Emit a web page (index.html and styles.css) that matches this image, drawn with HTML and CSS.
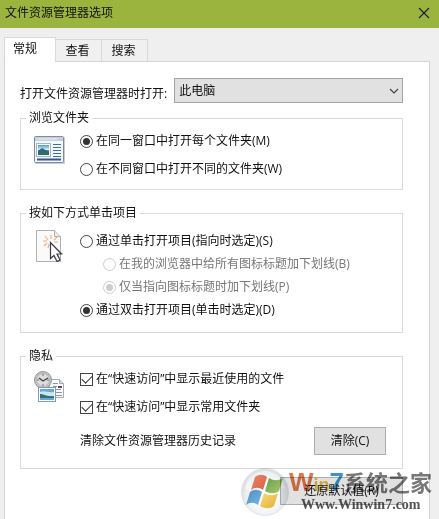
FILE: index.html
```html
<!DOCTYPE html>
<html lang="zh-CN">
<head>
    <meta charset="utf-8" />
    <title>文件资源管理器选项</title>
    <link rel="stylesheet" href="styles.css">
</head>
<body>
    <header class="titlebar">
        <span class="title">文件资源管理器选项</span>
        <button type="button" class="close" aria-label="关闭">
            <svg width="12" height="12" viewBox="0 0 12 12"><path d="M1 1L11 11M11 1L1 11" stroke="#222" stroke-width="1.2" fill="none"/></svg>
        </button>
    </header>
    <div class="tabs">
        <button type="button" class="tab active">常规</button>
        <button type="button" class="tab">查看</button>
        <button type="button" class="tab">搜索</button>
    </div>
    <main class="panel">
        <div class="open-row">
            <label for="open-to">打开文件资源管理器时打开:</label>
            <div class="select-wrap">
                <select id="open-to">
                    <option>此电脑</option>
                    <option>快速访问</option>
                </select>
                <svg class="arrow" width="10" height="6" viewBox="0 0 10 6"><path d="M1 1L5 5L9 1" stroke="#444" stroke-width="1.2" fill="none"/></svg>
            </div>
        </div>

        <fieldset class="group browse">
            <legend>浏览文件夹</legend>
            <svg class="icon" width="32" height="32" viewBox="0 0 32 32">
                <defs>
                    <linearGradient id="photo" x1="0" y1="0" x2="0" y2="1">
                        <stop offset="0" stop-color="#4f9ccc"/>
                        <stop offset=".45" stop-color="#d5edf3"/>
                        <stop offset=".6" stop-color="#2c6a74"/>
                        <stop offset="1" stop-color="#5ba4a5"/>
                    </linearGradient>
                </defs>
                <rect x="1" y="3" width="30" height="27" rx="1" fill="#c9ccd0"/>
                <rect x="0.500" y="2.500" width="29" height="26" rx="1" fill="#f3f7fb" stroke="#7d8ba2"/>
                <path d="M1 3h28v4H1z" fill="#c9d0da"/>
                <path d="M3 5h20" stroke="#e9eff5"/>
                <rect x="2.500" y="9.500" width="14" height="13" fill="#fff" stroke="#a3b6c6"/>
                <rect x="4" y="11" width="11" height="10" fill="url(#photo)"/>
                <path d="M4 17l4-3 7 4v3H4z" fill="#2c6a74"/>
                <path d="M19 10.500h8M19 13.500h8M19 16.500h8M19 19.500h8M19 22.500h8" stroke="#46699b"/>
                <path d="M3 25.500h24" stroke="#34568d" stroke-width="2"/>
            </svg>
            <div class="options">
                <label class="option"><input type="radio" name="browse" checked>在同一窗口中打开每个文件夹(M)</label>
                <label class="option"><input type="radio" name="browse">在不同窗口中打开不同的文件夹(W)</label>
            </div>
        </fieldset>

        <fieldset class="group click">
            <legend>按如下方式单击项目</legend>
            <svg class="icon" width="32" height="36" viewBox="0 0 32 36">
                <path d="M2.500 1.500h18l6 6v25h-24z" fill="#fafafa" stroke="#b0b0b0"/>
                <path d="M20.500 1.500v6h6" fill="#e9e9e9" stroke="#b0b0b0"/>
                <path d="M17 10V6M14 11l-3-4M20 11l4-4M13 14l-3 3M13 12H9M15 15l-1 4M20 13h4" stroke="#edb183" stroke-width="1.200"/>
                <path d="M18 15l11 10h-5l3 6-4 2-3-6-4 4z" fill="#bbb"/>
                <path d="M16.500 13.500v16l3.500-3 3 6 3-1.500-3-6h4.500z" fill="#fff" stroke="#383c48" stroke-width="1.200"/>
            </svg>
            <div class="options">
                <label class="option"><input type="radio" name="click">通过单击打开项目(指向时选定)(S)</label>
                <label class="option sub"><input type="radio" name="underline" disabled>在我的浏览器中给所有图标标题加下划线(B)</label>
                <label class="option sub"><input type="radio" name="underline" disabled checked>仅当指向图标标题时加下划线(P)</label>
                <label class="option"><input type="radio" name="click" checked>通过双击打开项目(单击时选定)(D)</label>
            </div>
        </fieldset>

        <fieldset class="group privacy">
            <legend>隐私</legend>
            <svg class="icon" width="32" height="34" viewBox="0 0 32 34">
                <path d="M15.500 9.500h10l4 4v14h-14z" fill="#fbfbfb" stroke="#a5acb2"/>
                <path d="M25.500 9.500v4h4" fill="#ddd" stroke="#a5acb2"/>
                <path d="M19 13.500h5M19 16.500h4M19 19.500h8M22 22.500h6M22 25.500h6" stroke="#8495ad"/>
                <path d="M24 16h4v2h-4z" fill="#456"/>
                <circle cx="9" cy="10" r="8.500" fill="#c9c9c9" stroke="#969696"/>
                <circle cx="9" cy="10" r="6.500" fill="#dcdcdc" stroke="#b0b0b0"/>
                <path d="M9 4v2M9 14v2M3 10h2M13 10h2" stroke="#777"/>
                <path d="M5 8l4 3 5-3" stroke="#444" stroke-width="1.300" fill="none"/>
                <rect x="4.500" y="17.500" width="17" height="14" fill="#fff" stroke="#7f9db8"/>
                <path d="M6 19h14v11H6z" fill="#65a9d8"/>
                <path d="M6 22c4-2 8 1 14 0v4H6z" fill="#cce6f1"/>
                <path d="M6 24c4 0 7 3 14 2v2H6z" fill="#35716d"/>
            </svg>
            <div class="options">
                <label class="option"><input type="checkbox" checked>在“快速访问”中显示最近使用的文件</label>
                <label class="option"><input type="checkbox" checked>在“快速访问”中显示常用文件夹</label>
                <div class="clear-row">
                    <span>清除文件资源管理器历史记录</span>
                    <button type="button" class="btn clear">清除(C)</button>
                </div>
            </div>
        </fieldset>

        <div class="footer">
            <button type="button" class="btn restore">还原默认值(R)</button>
            <div class="brand">
                <svg class="orb" width="48" height="48" viewBox="0 0 48 48">
                    <defs>
                        <radialGradient id="glass" cx=".5" cy=".6" r=".5">
                            <stop offset="0" stop-color="#fff"/>
                            <stop offset=".7" stop-color="#f3f6f8"/>
                            <stop offset="1" stop-color="#dde1e5"/>
                        </radialGradient>
                        <linearGradient id="red" x1="0" y1="0" x2="1" y2="1"><stop offset="0" stop-color="#e98562"/><stop offset="1" stop-color="#d9604a"/></linearGradient>
                        <linearGradient id="green" x1="0" y1="0" x2="1" y2="1"><stop offset="0" stop-color="#65a04b"/><stop offset="1" stop-color="#abc96b"/></linearGradient>
                        <linearGradient id="blue" x1="0" y1="0" x2="1" y2="1"><stop offset="0" stop-color="#4f8bc4"/><stop offset="1" stop-color="#77b9df"/></linearGradient>
                        <linearGradient id="yellow" x1="0" y1="0" x2="1" y2="1"><stop offset="0" stop-color="#f8dc73"/><stop offset="1" stop-color="#e6ad3b"/></linearGradient>
                    </defs>
                    <circle cx="24" cy="24" r="23.500" fill="url(#glass)" stroke="#d8dde1" stroke-opacity=".7"/>
                    <path d="M4 21C7 -3 41 -3 44 21C32 17 18 26 4 21z" fill="#fff" opacity=".5"/>
                    <path d="M14 9c4-3 8-3 12 0l-4 13c-4-3-8-3-12 0z" fill="url(#red)"/>
                    <path d="M28 10c5 3 9 3 14 0l-4 13c-4 3-9 3-14 0z" fill="url(#green)"/>
                    <path d="M9 24c4-3 8-3 12 0l-4 13c-4-3-8-3-12 0z" fill="url(#blue)"/>
                    <path d="M23 25c5 3 9 3 14 0l-4 13c-4 3-9 3-14 0z" fill="url(#yellow)"/>
                </svg>
                <div class="brand-text">
                    <div class="brand-name"><span class="w">W</span><span class="in">in</span><span class="seven">7</span><span class="home">系统之家</span></div>
                    <div class="brand-url">Www.Winwin7.com</div>
                </div>
            </div>
        </div>
    </main>
</body>
</html>
```
FILE: styles.css
```css
* {
    box-sizing: border-box;
}
body {
    margin: 0;
    min-height: 100vh;
    display: flex;
    flex-direction: column;
    background: #efefef;
    color: #111;
}
body, button, select {
    font-family: "Open Sans", "Noto Sans CJK SC", sans-serif;
    font-size: 12px;
    line-height: 18px;
}
button, select {
    color: #111;
    border-radius: 0;
}
svg {
    display: block;
    flex: none;
}
.titlebar {
    display: flex;
    align-items: center;
    justify-content: space-between;
    height: 28px;
    padding: 0 9px 3px 5px;
    background: #9ab43e;
}
.close {
    padding: 0;
    border: 0;
    background: none;
}
.tabs {
    display: flex;
    align-items: flex-end;
    height: 33px;
    padding-left: 4px;
}
.tab {
    width: 46px;
    height: 22px;
    padding: 0 10px 0 8px;
    border: 1px solid #d9d9d9;
    border-left: 0;
    border-bottom: 0;
    background: #f0f0f0;
}
.tab.active {
    position: relative;
    width: 52px;
    height: 25px;
    margin-bottom: -1px;
    padding: 0 10px 2px 0;
    border-left: 1px solid #d9d9d9;
    background: #fff;
}
.panel {
    flex: 1;
    margin: 0 9px 0 4px;
    padding: 16px 26px 13px 15px;
    border: 1px solid #d5d5d5;
    border-bottom: 0;
    background: #fff;
}
.open-row {
    display: flex;
    align-items: flex-end;
    gap: 7px;
}
.select-wrap {
    position: relative;
    flex: 1;
}
select {
    display: block;
    width: 100%;
    height: 25px;
    padding: 0 4px;
    border: 1px solid #a5a5a5;
    background: #e1e1e1;
    appearance: none;
}
.arrow {
    position: absolute;
    right: 4px;
    top: 10px;
    pointer-events: none;
}
.group {
    display: flex;
    align-items: flex-start;
    gap: 14px;
    min-width: 0;
    margin: 14px 0 0;
    padding: 0 16px 13px 13px;
    border: 1px solid #d9d9d9;
}
.browse {
    margin-top: 6px;
    padding-bottom: 11px;
}
legend {
    margin-left: -8px;
    padding: 0 3px;
}
.icon {
    margin-top: 7px;
}
.privacy .icon {
    margin-top: 5px;
}
.options {
    flex: 1;
    display: flex;
    flex-direction: column;
    padding-top: 5px;
}
.option {
    display: flex;
    align-items: center;
    gap: 3px;
    height: 18px;
    white-space: nowrap;
}
.browse .options, .privacy .options {
    gap: 10px;
}
.click .options {
    gap: 5px;
    padding-top: 10px;
}
.sub {
    padding-left: 23px;
    color: #777;
}
input {
    flex: none;
    display: grid;
    place-content: center;
    width: 13px;
    height: 13px;
    margin: 0;
    border: 1px solid #444;
    background: #fff;
    appearance: none;
}
input[type="radio"] {
    border-radius: 50%;
}
input[type="radio"]:checked::before {
    content: "";
    width: 7px;
    height: 7px;
    border-radius: 50%;
    background: #333;
}
input[type="checkbox"]:checked::before {
    content: "";
    width: 9px;
    height: 5px;
    margin-bottom: 3px;
    border: solid #333;
    border-width: 0 0 1px 1px;
    transform: rotate(-45deg);
}
input:disabled {
    border-color: #ccc;
}
input[type="radio"]:disabled::before {
    background: #ccc;
}
.clear-row {
    display: flex;
    align-items: center;
    justify-content: space-between;
    margin-top: 1px;
}
.btn {
    height: 28px;
    padding: 0;
    border: 1px solid #adadad;
    background: #e1e1e1;
}
.clear {
    width: 72px;
}
.footer {
    position: relative;
    display: flex;
    justify-content: flex-end;
    margin-top: 8px;
}
.restore {
    width: 123px;
}
/* site logo lies over the restore button */
.brand {
    position: absolute;
    top: -9px;
    right: -29px;
    display: flex;
    pointer-events: none;
    mix-blend-mode: multiply;
}
.brand-text {
    width: 143px;
}
.brand-name {
    display: flex;
    align-items: baseline;
    height: 28px;
    font: bold 22px/28px "Liberation Sans", "Noto Sans CJK SC", sans-serif;
    white-space: nowrap;
}
.w {
    color: #e17748;
    font-size: 26px;
}
.in {
    color: #e7bd42;
    font-size: 18px;
}
.seven {
    color: #3994c7;
    font-size: 26px;
}
.home {
    color: #777;
}
.brand-url {
    padding-left: 12px;
    color: #555;
    font: bold 14px/18px "Liberation Serif", serif;
}
```
